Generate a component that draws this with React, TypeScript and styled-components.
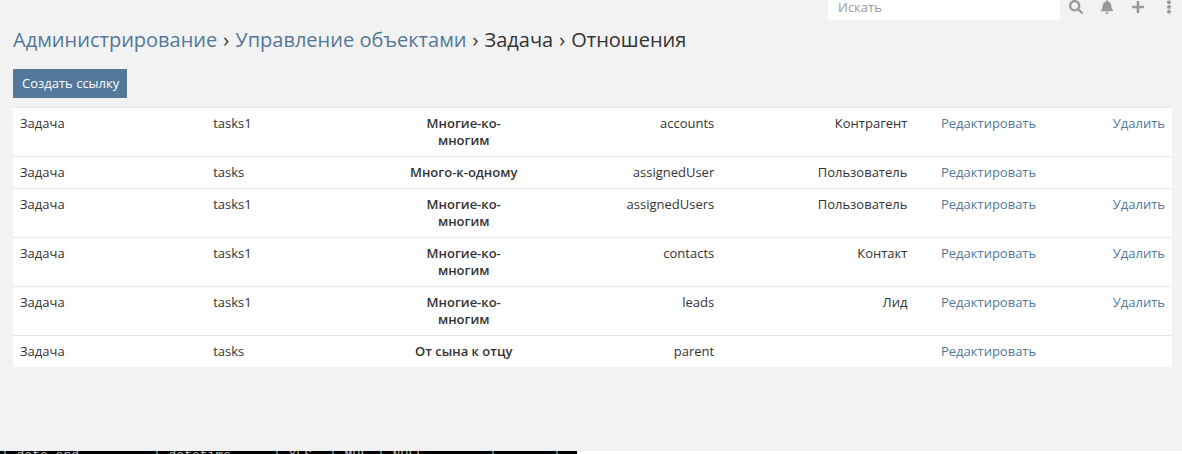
import React from "react";
import styled, { createGlobalStyle } from "styled-components";
import { FaBell, FaEllipsisV, FaPlus, FaSearch } from "react-icons/fa";

const GlobalStyle = createGlobalStyle`
  *, *::before, *::after { box-sizing: border-box; }
  body {
    margin: 0;
    background: #fff;
    color: #333;
    font-family: "Open Sans", sans-serif;
    font-size: 13px;
    line-height: 17px;
  }
`;

const Page = styled.div`
  background: #f2f2f2;
  padding-bottom: 84px;
`;

const TopBar = styled.header`
  display: flex;
  justify-content: flex-end;
  align-items: flex-end;
  height: 20px;
  padding-right: 5px;
  overflow: hidden;
`;

const SearchInput = styled.input`
  width: 232px;
  height: 27px;
  padding: 0 10px;
  border: 0;
  border-radius: 0;
  background: #fff;
  color: #333;
  font: inherit;
  &::placeholder { color: #999; opacity: 1; }
`;

const Actions = styled.nav`
  display: flex;
  gap: 16px;
  margin-left: 8px;
  margin-right: 1px;
`;

const IconButton = styled.button`
  display: flex;
  align-items: center;
  justify-content: center;
  width: 15px;
  height: 27px;
  padding: 0;
  border: 0;
  background: none;
  color: #999;
  font-size: 14px;
  cursor: pointer;
`;

const Content = styled.main`
  padding: 7px 10px 0 13px;
`;

const Breadcrumbs = styled.h1`
  display: flex;
  flex-wrap: wrap;
  column-gap: 6px;
  margin: 0;
  font-size: 20px;
  line-height: 26px;
  font-weight: 400;
`;

const Link = styled.a`
  color: #537899;
  text-decoration: none;
`;

const CreateButton = styled.button`
  display: block;
  height: 29px;
  margin: 16px 0 9px;
  padding: 0 8px 0 9px;
  border: 0;
  background: #537899;
  color: #fff;
  font: inherit;
  cursor: pointer;
`;

const Table = styled.table`
  width: 100%;
  table-layout: fixed;
  border-collapse: separate;
  border-spacing: 0;
  background: #fff;
`;

const Column = styled.col<{ $share: number }>`
  width: ${(p) => p.$share}%;
`;

const Cell = styled.td<{ $align?: "left" | "center" | "right"; $strong?: boolean }>`
  padding: 7px;
  border-top: 1px solid #e8e8e8;
  vertical-align: top;
  text-align: ${(p) => p.$align ?? "left"};
  font-weight: ${(p) => (p.$strong ? 600 : 400)};
`;

const Console = styled.footer`
  display: flex;
  width: 577px;
  max-width: 100%;
  height: 3px;
  padding-left: 1px;
  overflow: hidden;
  background: #000;
  color: #bbb;
  font-family: "Liberation Mono", monospace;
  font-size: 13px;
  line-height: 10px;
  white-space: pre;
`;

const ConsoleCell = styled.span<{ $width: number }>`
  flex: 0 0 ${(p) => p.$width}px;
`;

const MANY = "Многие-ко-многим";

const rows = [
  { link: "tasks1", type: MANY, foreign: "accounts", entity: "Контрагент", removable: true },
  { link: "tasks", type: "Много-к-одному", foreign: "assignedUser", entity: "Пользователь", removable: false },
  { link: "tasks1", type: MANY, foreign: "assignedUsers", entity: "Пользователь", removable: true },
  { link: "tasks1", type: MANY, foreign: "contacts", entity: "Контакт", removable: true },
  { link: "tasks1", type: MANY, foreign: "leads", entity: "Лид", removable: true },
  { link: "tasks", type: "От сына к отцу", foreign: "parent", entity: "", removable: false },
];

const columnShares = [15, 15, 10, 15, 15, 10, 10];

const consoleCells = [
  { text: "| date_end", width: 152 },
  { text: "| datetime", width: 120 },
  { text: "| YES", width: 56 },
  { text: "| MUL", width: 48 },
  { text: "| NULL", width: 112 },
  { text: "|", width: 64 },
  { text: "|", width: 16 },
];

export default function App() {
  return (
    <>
      <GlobalStyle />
      <Page>
        <TopBar>
          <SearchInput type="text" placeholder="Искать" aria-label="Искать" />
          <Actions>
            <IconButton aria-label="Поиск"><FaSearch /></IconButton>
            <IconButton aria-label="Уведомления"><FaBell /></IconButton>
            <IconButton aria-label="Создать"><FaPlus /></IconButton>
            <IconButton aria-label="Меню"><FaEllipsisV /></IconButton>
          </Actions>
        </TopBar>
        <Content>
          <Breadcrumbs>
            <Link href="#admin">Администрирование</Link>
            <span>›</span>
            <Link href="#entities">Управление объектами</Link>
            <span>›</span>
            <span>Задача</span>
            <span>›</span>
            <span>Отношения</span>
          </Breadcrumbs>
          <CreateButton>Создать ссылку</CreateButton>
          <Table>
            <colgroup>
              {columnShares.map((share, i) => <Column key={i} $share={share} />)}
            </colgroup>
            <tbody>
              {rows.map((row) => (
                <tr key={row.foreign}>
                  <Cell>Задача</Cell>
                  <Cell>{row.link}</Cell>
                  <Cell $align="center" $strong>{row.type}</Cell>
                  <Cell $align="right">{row.foreign}</Cell>
                  <Cell $align="right">{row.entity}</Cell>
                  <Cell $align="right"><Link href="#edit">Редактировать</Link></Cell>
                  <Cell $align="right">{row.removable && <Link href="#remove">Удалить</Link>}</Cell>
                </tr>
              ))}
            </tbody>
          </Table>
        </Content>
      </Page>
      <Console>
        {consoleCells.map((cell, i) => (
          <ConsoleCell key={i} $width={cell.width}>{cell.text}</ConsoleCell>
        ))}
      </Console>
    </>
  );
}
